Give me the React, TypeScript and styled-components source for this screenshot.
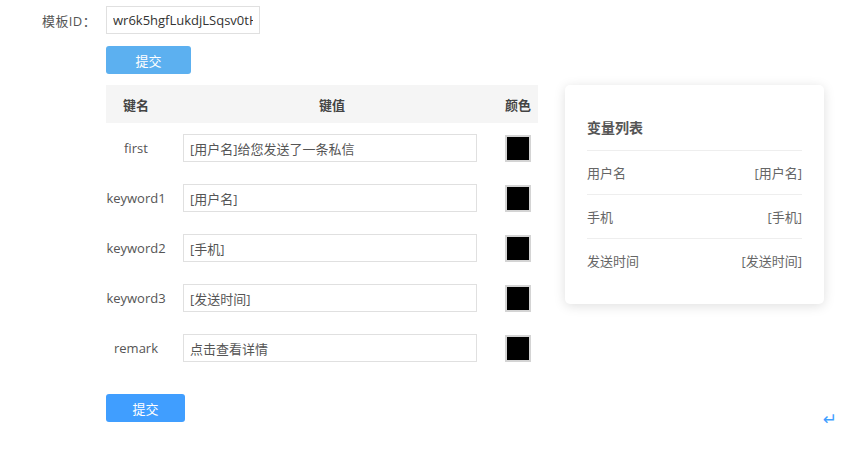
import styled, { createGlobalStyle } from "styled-components";

const GlobalStyle = createGlobalStyle`
    body {
        margin: 0;
        background: #fff;
        font-family: "Open Sans", "Noto Sans CJK SC", sans-serif;
        font-size: 13px;
        color: #555;
    }
`

const Page = styled.div`
    width: 860px;
    height: 454px;
    box-sizing: border-box;
    padding: 6px 23px 0 42px;
    display: flex;
    flex-direction: column;
`

const IdRow = styled.div`
    display: flex;
    align-items: center;
    gap: 8px;
`

const IdLabel = styled.span`
    width: 56px;
    color: #555;
    font-size: 13px;
    white-space: nowrap;
    letter-spacing: 0.4px;
`

const TextInput = styled.input<{ $w: number }>`
    width: ${p => p.$w}px;
    height: 28px;
    box-sizing: border-box;
    border: 1px solid #e0e0e0;
    padding: 0 6px;
    font-family: "Open Sans", "Noto Sans CJK SC", sans-serif;
    font-size: 13px;
    color: #555;
    outline: none;
    background: #fff;
`

const Body = styled.div`
    margin-left: 64px;
    display: flex;
    flex-direction: column;
`

const Button = styled.button<{ $light?: boolean; $w: number }>`
    width: ${p => p.$w}px;
    height: 28px;
    border: none;
    border-radius: 3px;
    background: ${p => p.$light ? "#5cb0f0" : "#409eff"};
    color: #fff;
    font-family: "Noto Sans CJK SC", sans-serif;
    font-size: 13px;
    cursor: pointer;
`

const Middle = styled.div`
    margin-top: 11px;
    display: flex;
    align-items: flex-start;
    gap: 27px;
`

const Table = styled.div`
    width: 432px;
    display: flex;
    flex-direction: column;
`

const Row = styled.div<{ $head?: boolean }>`
    display: grid;
    grid-template-columns: 60px 1fr 40px;
    align-items: center;
    height: ${p => p.$head ? 38 : 50}px;
    background: ${p => p.$head ? "#f5f5f5" : "transparent"};
    font-weight: ${p => p.$head ? 600 : 400};
    color: ${p => p.$head ? "#444" : "#555"};
`

const Cell = styled.div`
    display: flex;
    align-items: center;
    justify-content: center;
    white-space: nowrap;
`

const ValueCell = styled.div`
    display: flex;
    align-items: center;
    padding-left: 17px;
`

const Swatch = styled.div`
    width: 22px;
    height: 23px;
    background: #000;
    border: 2px solid #d4d4d4;
`

const Card = styled.div`
    width: 259px;
    box-sizing: border-box;
    padding: 0 22px 22px;
    border-radius: 5px;
    background: #fff;
    box-shadow: 0 2px 12px rgba(0, 0, 0, 0.13);
`

const CardTitle = styled.div`
    padding: 33px 0 12px;
    line-height: 20px;
    font-size: 14px;
    font-weight: 600;
    color: #555;
    border-bottom: 1px solid #eee;
`

const VarRow = styled.div<{ $last?: boolean }>`
    height: 43px;
    display: flex;
    align-items: center;
    justify-content: space-between;
    color: #666;
    border-bottom: ${p => p.$last ? "none" : "1px solid #eee"};
`

const Bottom = styled.div`
    margin-top: 21px;
    display: flex;
    align-items: flex-end;
    justify-content: space-between;
`

const ReturnMark = styled.span`
    color: #409eff;
    font-family: "DejaVu Sans", sans-serif;
    font-size: 17px;
    line-height: 1;
    margin-bottom: -6px;
`

const rows = [
    { key: "first", value: "[用户名]给您发送了一条私信" },
    { key: "keyword1", value: "[用户名]" },
    { key: "keyword2", value: "[手机]" },
    { key: "keyword3", value: "[发送时间]" },
    { key: "remark", value: "点击查看详情" },
]

const vars = [
    { name: "用户名", tag: "[用户名]" },
    { name: "手机", tag: "[手机]" },
    { name: "发送时间", tag: "[发送时间]" },
]

export default function App() {
    return (
        <>
            <GlobalStyle />
            <Page>
                <IdRow>
                    <IdLabel>模板ID：</IdLabel>
                    <TextInput $w={154} readOnly defaultValue="wr6k5hgfLukdjLSqsv0tHk" style={{ color: "#333" }} />
                </IdRow>
                <Body>
                    <Button $light $w={85} style={{ marginTop: 12 }}>提交</Button>
                    <Middle>
                        <Table>
                            <Row $head>
                                <Cell>键名</Cell>
                                <Cell>键值</Cell>
                                <Cell>颜色</Cell>
                            </Row>
                            {rows.map(r => (
                                <Row key={r.key}>
                                    <Cell>{r.key}</Cell>
                                    <ValueCell>
                                        <TextInput $w={294} readOnly defaultValue={r.value} />
                                    </ValueCell>
                                    <Cell><Swatch /></Cell>
                                </Row>
                            ))}
                        </Table>
                        <Card>
                            <CardTitle>变量列表</CardTitle>
                            {vars.map((v, i) => (
                                <VarRow key={v.name} $last={i === vars.length - 1}>
                                    <span>{v.name}</span>
                                    <span>{v.tag}</span>
                                </VarRow>
                            ))}
                        </Card>
                    </Middle>
                    <Bottom>
                        <Button $w={79}>提交</Button>
                        <ReturnMark>↵</ReturnMark>
                    </Bottom>
                </Body>
            </Page>
        </>
    )
}
